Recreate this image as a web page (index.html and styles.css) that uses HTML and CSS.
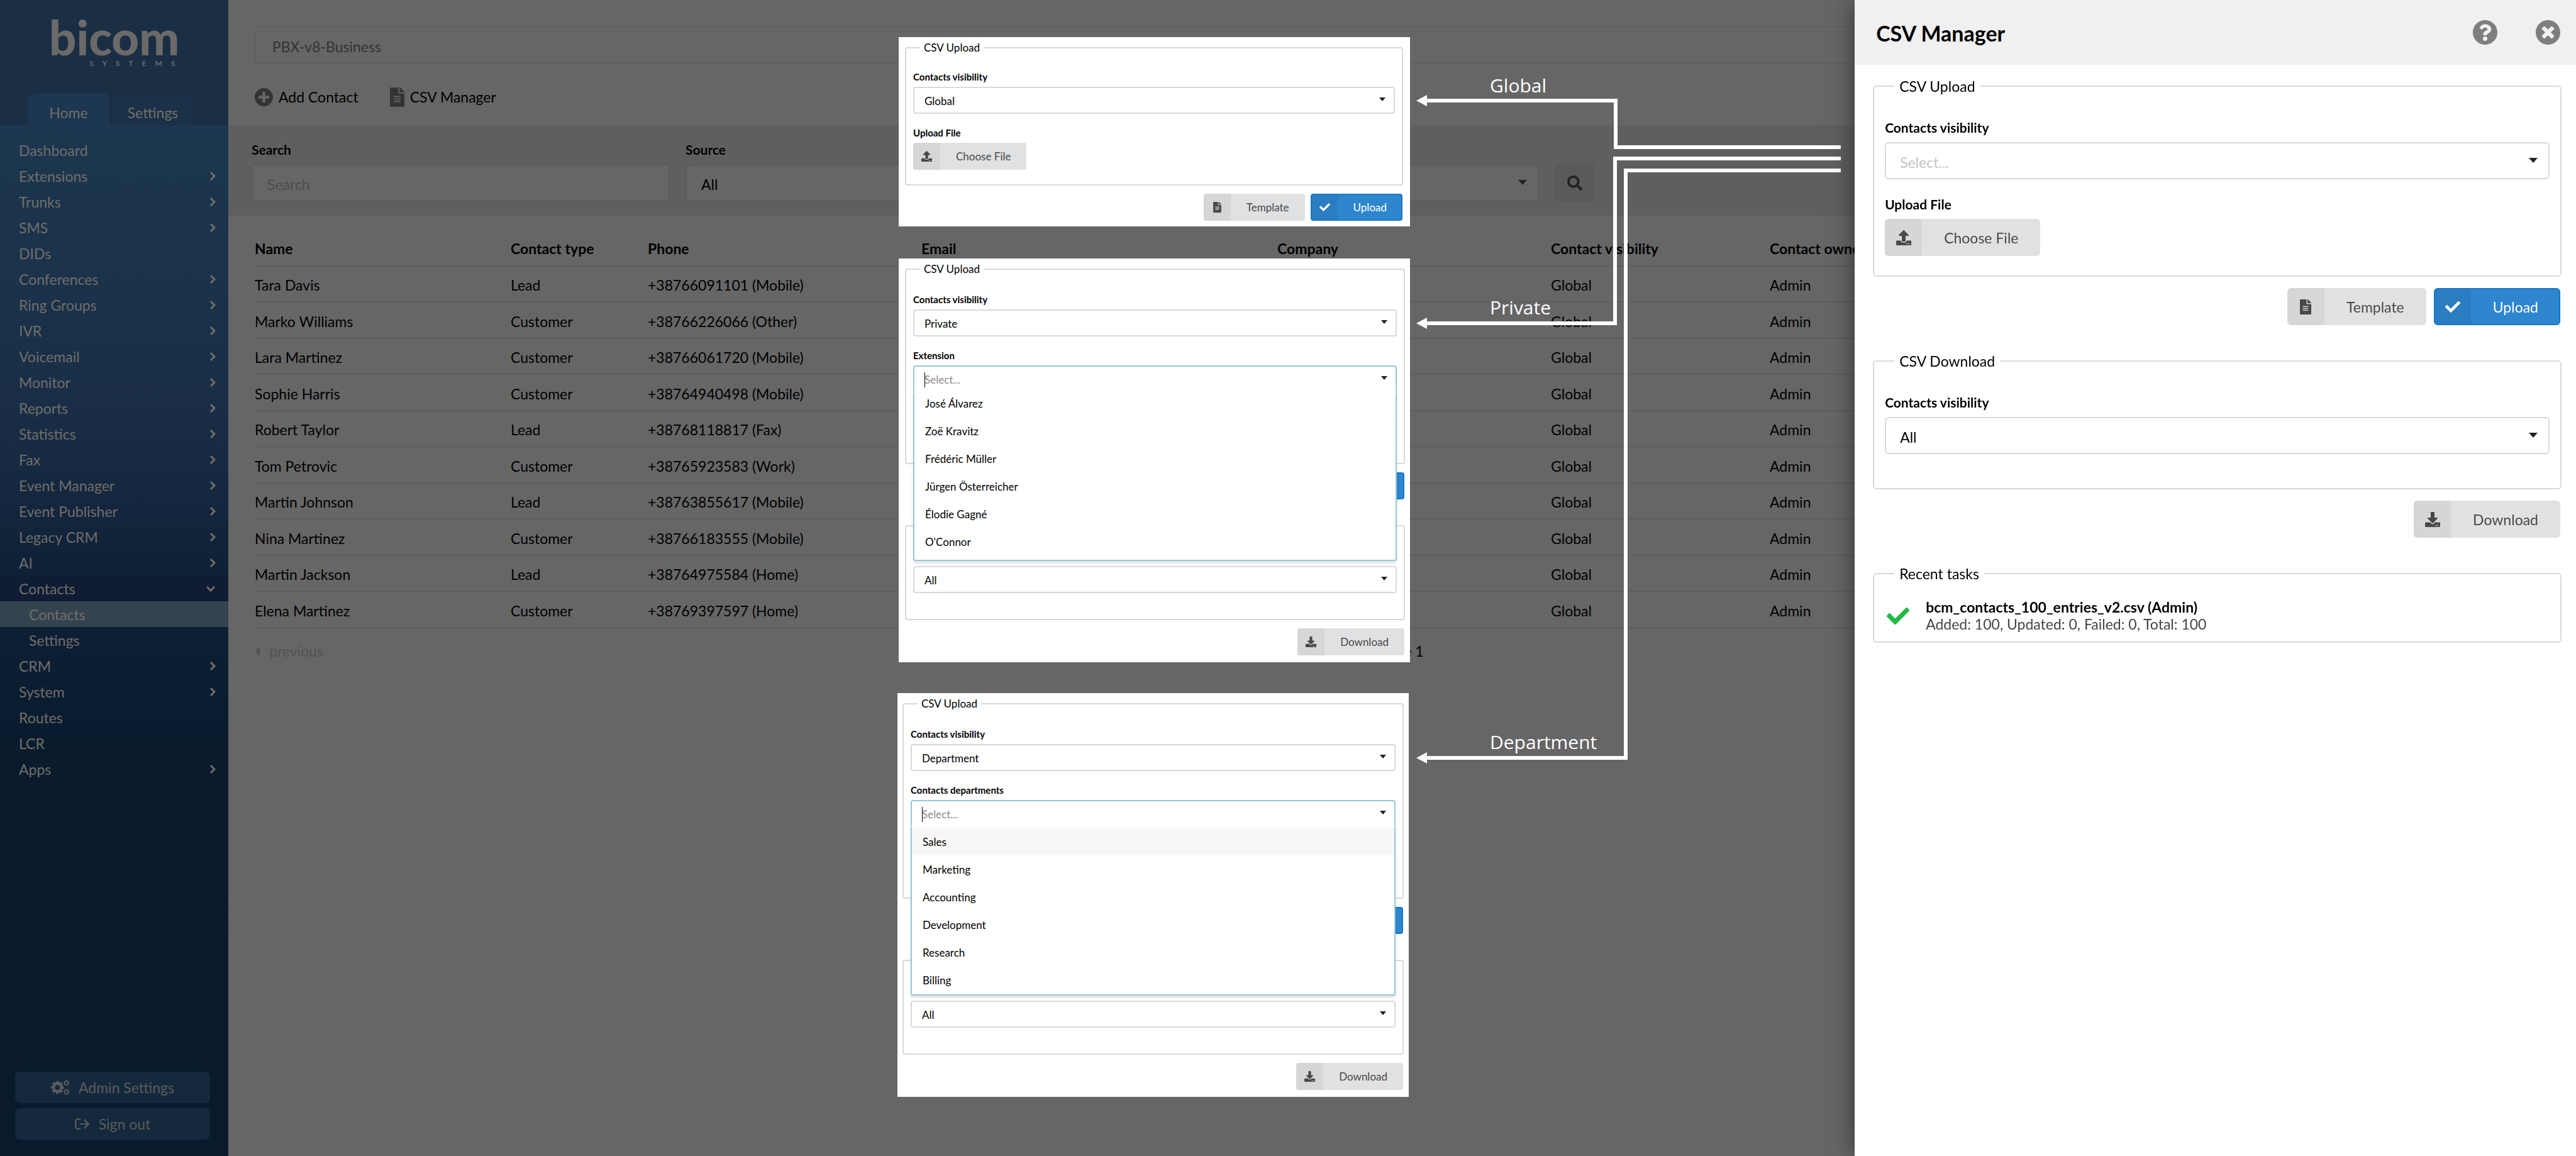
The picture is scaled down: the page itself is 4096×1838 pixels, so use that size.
FILE: index.html
```html
<!DOCTYPE html>
<html lang="en">
<head>
<meta charset="utf-8">
<meta name="viewport" content="width=device-width,initial-scale=1.0">
<title>Contacts - CSV Manager</title>
<link rel="stylesheet" href="styles.css">
</head>
<body>

<!-- icon set -->
<svg class="sprite" aria-hidden="true">
<symbol id="i-file" viewBox="0 0 384 512"><path d="M224 136V0H24C10.7 0 0 10.7 0 24v464c0 13.3 10.7 24 24 24h336c13.3 0 24-10.7 24-24V160H248c-13.2 0-24-10.8-24-24zm64 236c0 6.600-5.400 12-12 12H108c-6.600 0-12-5.400-12-12v-8c0-6.600 5.400-12 12-12h168c6.600 0 12 5.400 12 12v8zm0-64c0 6.600-5.400 12-12 12H108c-6.600 0-12-5.400-12-12v-8c0-6.600 5.400-12 12-12h168c6.600 0 12 5.400 12 12v8zm0-72v8c0 6.600-5.400 12-12 12H108c-6.600 0-12-5.400-12-12v-8c0-6.600 5.400-12 12-12h168c6.600 0 12 5.400 12 12zm96-114.100v6.100H256V0h6.100c6.400 0 12.500 2.500 17 7l97.900 98c4.500 4.500 7 10.600 7 16.900z"/></symbol>
<symbol id="i-check" viewBox="0 65 512 382"><path d="M173.900 439.400l-166.400-166.400c-10-10-10-26.200 0-36.200l36.200-36.200c10-10 26.200-10 36.200 0L192 312.700 432.100 72.600c10-10 26.200-10 36.200 0l36.200 36.200c10 10 10 26.200 0 36.200l-294.400 294.400c-10 10-26.200 10-36.200 0z"/></symbol>
<symbol id="i-upload" viewBox="0 0 512 512"><path d="M296 384h-80c-13.300 0-24-10.700-24-24V192h-87.700c-17.800 0-26.700-21.500-14.100-34.100L242.300 5.700c7.500-7.500 19.800-7.500 27.300 0l152.200 152.200c12.600 12.600 3.700 34.100-14.100 34.100H320v168c0 13.300-10.700 24-24 24zm216-8v112c0 13.300-10.700 24-24 24H24c-13.300 0-24-10.700-24-24V376c0-13.300 10.700-24 24-24h136v8c0 30.900 25.100 56 56 56h80c30.900 0 56-25.100 56-56v-8h136c13.300 0 24 10.700 24 24zm-124 88c0-11-9-20-20-20s-20 9-20 20 9 20 20 20 20-9 20-20zm64 0c0-11-9-20-20-20s-20 9-20 20 9 20 20 20 20-9 20-20z"/></symbol>
<symbol id="i-download" viewBox="0 0 512 512"><path d="M216 0h80c13.300 0 24 10.700 24 24v168h87.700c17.800 0 26.700 21.500 14.100 34.100L269.700 378.300c-7.500 7.500-19.800 7.500-27.300 0L90.100 226.100c-12.600-12.600-3.700-34.100 14.100-34.100H192V24c0-13.300 10.700-24 24-24zm296 376v112c0 13.300-10.700 24-24 24H24c-13.300 0-24-10.700-24-24V376c0-13.300 10.700-24 24-24h146.700l49 49c20.100 20.100 52.500 20.100 72.600 0l49-49H488c13.300 0 24 10.700 24 24zm-124 88c0-11-9-20-20-20s-20 9-20 20 9 20 20 20 20-9 20-20zm64 0c0-11-9-20-20-20s-20 9-20 20 9 20 20 20 20-9 20-20z"/></symbol>
<symbol id="i-plus" viewBox="8 8 496 496"><path d="M256 8C119 8 8 119 8 256s111 248 248 248 248-111 248-248S393 8 256 8zm144 276c0 6.600-5.400 12-12 12h-92v92c0 6.600-5.400 12-12 12h-56c-6.600 0-12-5.400-12-12v-92h-92c-6.600 0-12-5.400-12-12v-56c0-6.600 5.400-12 12-12h92v-92c0-6.600 5.400-12 12-12h56c6.600 0 12 5.400 12 12v92h92c6.600 0 12 5.400 12 12v56z"/></symbol>
<symbol id="i-close" viewBox="8 8 496 496"><path d="M256 8C119 8 8 119 8 256s111 248 248 248 248-111 248-248S393 8 256 8zm121.600 313.100c4.700 4.700 4.700 12.300 0 17L338 377.600c-4.700 4.700-12.300 4.700-17 0L256 312l-65.100 65.600c-4.700 4.700-12.300 4.700-17 0L134.400 338c-4.700-4.700-4.700-12.300 0-17l65.600-65-65.600-65.100c-4.700-4.700-4.700-12.300 0-17l39.600-39.600c4.700-4.700 12.300-4.700 17 0l65 65.700 65.100-65.600c4.700-4.700 12.300-4.700 17 0l39.600 39.600c4.700 4.700 4.700 12.300 0 17L312 256l65.600 65.100z"/></symbol>
<symbol id="i-help" viewBox="8 8 496 496"><path d="M504 256c0 137-111 248-248 248S8 393 8 256C8 119.100 119 8 256 8s248 111.100 248 248zM262.700 90c-54.500 0-89.300 23-116.600 63.800-3.500 5.300-2.400 12.400 2.700 16.200l34.700 26.300c5.200 4 12.600 3 16.700-2.100 17.900-22.700 30.100-35.800 57.300-35.800 20.400 0 45.700 13.100 45.700 33 0 15-12.400 22.700-32.500 34C247.100 238.500 216 254.900 216 296v4c0 6.600 5.400 12 12 12h56c6.600 0 12-5.400 12-12v-1.300c0-28.500 83.200-29.600 83.200-106.700 0-58-60.200-102-116.500-102zM256 338c-25.400 0-46 20.600-46 46 0 25.400 20.600 46 46 46s46-20.600 46-46c0-25.400-20.600-46-46-46z"/></symbol>
<symbol id="i-search" viewBox="0 0 512 512"><path d="M505 442.700L405.300 343c-4.500-4.500-10.600-7-17-7H372c27.600-35.300 44-79.700 44-128C416 93.100 322.900 0 208 0S0 93.100 0 208s93.100 208 208 208c48.300 0 92.700-16.400 128-44v16.300c0 6.400 2.500 12.500 7 17l99.700 99.700c9.400 9.400 24.600 9.400 33.900 0l28.300-28.300c9.400-9.400 9.400-24.600.1-34zM208 336c-70.700 0-128-57.200-128-128 0-70.700 57.200-128 128-128 70.700 0 128 57.200 128 128 0 70.700-57.200 128-128 128z"/></symbol>
<symbol id="i-right" viewBox="0 0 10 16"><path d="M2 2l6 6-6 6" fill="none" stroke="currentColor" stroke-width="3"/></symbol>
<symbol id="i-down" viewBox="0 0 16 10"><path d="M2 2l6 6 6-6" fill="none" stroke="currentColor" stroke-width="3"/></symbol>
<symbol id="i-cogs" viewBox="0 0 107 84"><g fill="none" stroke="currentColor"><circle cx="37" cy="42" r="22" stroke-width="16"/><circle cx="37" cy="42" r="32" stroke-width="10" stroke-dasharray="15 10.130" stroke-dashoffset="7"/><circle cx="88" cy="16" r="10" stroke-width="6"/><circle cx="88" cy="16" r="15" stroke-width="4" stroke-dasharray="8 7.700"/><circle cx="88" cy="67" r="10" stroke-width="6"/><circle cx="88" cy="67" r="15" stroke-width="4" stroke-dasharray="8 7.700"/></g></symbol>
<symbol id="i-out" viewBox="0 0 86 64"><path d="M33 5H16a11 11 0 0 0-11 11v32a11 11 0 0 0 11 11h17M28 32h50M53 7l26 25-26 25" fill="none" stroke="currentColor" stroke-width="8"/></symbol>
</svg>

<div class="app">

<aside class="sidebar">
<div class="side-head">
<div class="logo">
<div class="logo-name">bicom</div>
<div class="logo-sub">SYSTEMS</div>
</div>
<div class="tabs">
<a href="#" class="tab active">Home</a>
<a href="#" class="tab">Settings</a>
</div>
</div>
<nav class="menu">
<a href="#">Dashboard</a>
<a href="#">Extensions<svg><use href="#i-right"/></svg></a>
<a href="#">Trunks<svg><use href="#i-right"/></svg></a>
<a href="#">SMS<svg><use href="#i-right"/></svg></a>
<a href="#">DIDs</a>
<a href="#">Conferences<svg><use href="#i-right"/></svg></a>
<a href="#">Ring Groups<svg><use href="#i-right"/></svg></a>
<a href="#">IVR<svg><use href="#i-right"/></svg></a>
<a href="#">Voicemail<svg><use href="#i-right"/></svg></a>
<a href="#">Monitor<svg><use href="#i-right"/></svg></a>
<a href="#">Reports<svg><use href="#i-right"/></svg></a>
<a href="#">Statistics<svg><use href="#i-right"/></svg></a>
<a href="#">Fax<svg><use href="#i-right"/></svg></a>
<a href="#">Event Manager<svg><use href="#i-right"/></svg></a>
<a href="#">Event Publisher<svg><use href="#i-right"/></svg></a>
<a href="#">Legacy CRM<svg><use href="#i-right"/></svg></a>
<a href="#">AI<svg><use href="#i-right"/></svg></a>
<a href="#" class="open">Contacts<svg class="down"><use href="#i-down"/></svg></a>
<a href="#" class="sub current">Contacts</a>
<a href="#" class="sub">Settings</a>
<a href="#">CRM<svg><use href="#i-right"/></svg></a>
<a href="#">System<svg><use href="#i-right"/></svg></a>
<a href="#">Routes</a>
<a href="#">LCR</a>
<a href="#">Apps<svg><use href="#i-right"/></svg></a>
</nav>
<div class="side-foot">
<button class="side-btn"><svg class="cogs"><use href="#i-cogs"/></svg>Admin Settings</button>
<button class="side-btn"><svg class="out"><use href="#i-out"/></svg>Sign out</button>
</div>
</aside>

<main class="main">
<div class="top">
<input class="server" type="text" value="PBX-v8-Business" aria-label="Server" readonly>
</div>
<div class="toolbar">
<a href="#"><svg class="plus"><use href="#i-plus"/></svg>Add Contact</a>
<a href="#"><svg class="doc"><use href="#i-file"/></svg>CSV Manager</a>
</div>

<form class="filter">
<div>
<label for="search">Search</label>
<input id="search" type="text" placeholder="Search">
</div>
<div>
<label for="source">Source</label>
<div class="drop"><select id="source"><option>All</option></select></div>
</div>
<button type="button" aria-label="Find"><svg><use href="#i-search"/></svg></button>
</form>

<div class="list">
<table>
<colgroup><col class="c-name"><col class="c-type"><col class="c-phone"><col class="c-email"><col class="c-company"><col class="c-vis"><col></colgroup>
<thead>
<tr><th>Name</th><th>Contact type</th><th>Phone</th><th>Email</th><th>Company</th><th>Contact visibility</th><th>Contact owner</th></tr>
</thead>
<tbody>
<tr><td>Tara Davis</td><td>Lead</td><td>+38766091101 (Mobile)</td><td></td><td></td><td>Global</td><td>Admin</td></tr>
<tr><td>Marko Williams</td><td>Customer</td><td>+38766226066 (Other)</td><td></td><td></td><td>Global</td><td>Admin</td></tr>
<tr><td>Lara Martinez</td><td>Customer</td><td>+38766061720 (Mobile)</td><td></td><td></td><td>Global</td><td>Admin</td></tr>
<tr><td>Sophie Harris</td><td>Customer</td><td>+38764940498 (Mobile)</td><td></td><td></td><td>Global</td><td>Admin</td></tr>
<tr><td>Robert Taylor</td><td>Lead</td><td>+38768118817 (Fax)</td><td></td><td></td><td>Global</td><td>Admin</td></tr>
<tr><td>Tom Petrovic</td><td>Customer</td><td>+38765923583 (Work)</td><td></td><td></td><td>Global</td><td>Admin</td></tr>
<tr><td>Martin Johnson</td><td>Lead</td><td>+38763855617 (Mobile)</td><td></td><td></td><td>Global</td><td>Admin</td></tr>
<tr><td>Nina Martinez</td><td>Customer</td><td>+38766183555 (Mobile)</td><td></td><td></td><td>Global</td><td>Admin</td></tr>
<tr><td>Martin Jackson</td><td>Lead</td><td>+38764975584 (Home)</td><td></td><td></td><td>Global</td><td>Admin</td></tr>
<tr><td>Elena Martinez</td><td>Customer</td><td>+38769397597 (Home)</td><td></td><td></td><td>Global</td><td>Admin</td></tr>
</tbody>
</table>
<div class="pager">
<span class="prev">previous</span>
<span>Page 1</span>
</div>
</div>
</main>
</div>

<!-- arrows from the drawer to the three forms -->
<svg class="arrows">
<g fill="none" stroke="#fff" stroke-width="6">
<path d="M2266 160H2569V234H2927"/>
<path d="M2266 514H2568V252H2927"/>
<path d="M2266 1205H2585V271H2927"/>
</g>
<g fill="#fff">
<path d="M2252 160l17-9v18z"/>
<path d="M2252 514l17-9v18z"/>
<path d="M2252 1205l17-9v18z"/>
<text x="2369" y="147">Global</text>
<text x="2369" y="500">Private</text>
<text x="2369" y="1191">Department</text>
</g>
</svg>

<section class="popup popup-global">
<fieldset>
<legend>CSV Upload</legend>
<div class="field">
<label for="vis1">Contacts visibility</label>
<div class="drop"><select id="vis1"><option>Global</option></select></div>
</div>
<div class="field file">
<label for="file1">Upload File</label>
<button class="btn" id="file1"><i><svg><use href="#i-upload"/></svg></i><span>Choose File</span></button>
</div>
</fieldset>
<div class="actions">
<button class="btn"><i><svg class="doc"><use href="#i-file"/></svg></i><span>Template</span></button>
<button class="btn blue"><i><svg><use href="#i-check"/></svg></i><span>Upload</span></button>
</div>
</section>

<section class="popup popup-private">
<fieldset>
<legend>CSV Upload</legend>
<div class="field">
<label for="vis2">Contacts visibility</label>
<div class="drop"><select id="vis2"><option>Private</option></select></div>
</div>
<div class="field menu-space">
<label for="ext">Extension</label>
<div class="drop opened">
<input id="ext" type="text" placeholder="Select...">
<div class="options">
<ul class="scrolled">
<li>José Álvarez</li>
<li>Zoë Kravitz</li>
<li>Frédéric Müller</li>
<li>Jürgen Österreicher</li>
<li>Élodie Gagné</li>
<li>O'Connor</li>
</ul>
</div>
</div>
</div>
</fieldset>
<div class="actions">
<button class="btn blue behind" aria-label="Upload"></button>
</div>
<fieldset class="untitled" aria-label="CSV Download">
<div class="drop field"><select aria-label="Contacts visibility"><option>All</option></select></div>
</fieldset>
<div class="actions">
<button class="btn"><i><svg><use href="#i-download"/></svg></i><span>Download</span></button>
</div>
</section>

<section class="popup popup-department">
<fieldset>
<legend>CSV Upload</legend>
<div class="field">
<label for="vis3">Contacts visibility</label>
<div class="drop"><select id="vis3"><option>Department</option></select></div>
</div>
<div class="field menu-space">
<label for="dep">Contacts departments</label>
<div class="drop opened">
<input id="dep" type="text" placeholder="Select...">
<div class="options">
<ul>
<li class="hover">Sales</li>
<li>Marketing</li>
<li>Accounting</li>
<li>Development</li>
<li>Research</li>
<li>Billing</li>
</ul>
</div>
</div>
</div>
</fieldset>
<div class="actions">
<button class="btn blue behind" aria-label="Upload"></button>
</div>
<fieldset class="untitled" aria-label="CSV Download">
<div class="drop field"><select aria-label="Contacts visibility"><option>All</option></select></div>
</fieldset>
<div class="actions">
<button class="btn"><i><svg><use href="#i-download"/></svg></i><span>Download</span></button>
</div>
</section>

<aside class="drawer">
<header>
<h1>CSV Manager</h1>
<button aria-label="Help"><svg><use href="#i-help"/></svg></button>
<button aria-label="Close"><svg><use href="#i-close"/></svg></button>
</header>
<div class="drawer-body">
<fieldset>
<legend>CSV Upload</legend>
<div class="field">
<label for="vis">Contacts visibility</label>
<div class="drop"><select id="vis" class="empty"><option>Select...</option></select></div>
</div>
<div class="field file">
<label for="file">Upload File</label>
<button class="btn" id="file"><i><svg><use href="#i-upload"/></svg></i><span>Choose File</span></button>
</div>
</fieldset>
<div class="actions">
<button class="btn"><i><svg class="doc"><use href="#i-file"/></svg></i><span>Template</span></button>
<button class="btn blue"><i><svg><use href="#i-check"/></svg></i><span>Upload</span></button>
</div>
<fieldset>
<legend>CSV Download</legend>
<div class="field">
<label for="down">Contacts visibility</label>
<div class="drop"><select id="down"><option>All</option></select></div>
</div>
</fieldset>
<div class="actions">
<button class="btn"><i><svg><use href="#i-download"/></svg></i><span>Download</span></button>
</div>
<fieldset class="recent">
<legend>Recent tasks</legend>
<div class="task">
<svg><use href="#i-check"/></svg>
<div>
<b>bcm_contacts_100_entries_v2.csv (Admin)</b>
<p>Added: 100, Updated: 0, Failed: 0, Total: 100</p>
</div>
</div>
</fieldset>
</div>
</aside>

</body>
</html>
```

FILE: styles.css
```css
*
{
box-sizing:border-box;
}
body
{
margin:0;
background:#666;
font-family:Lato,sans-serif;
font-size:23px;
line-height:28px;
color:#000;
}
a
{
color:inherit;
text-decoration:none;
}
button,input,select
{
font:inherit;
color:inherit;
margin:0;
}
svg
{
fill:currentColor;
}
.sprite
{
position:absolute;
width:0;
height:0;
}
.app
{
display:flex;
min-height:100vh;
}

/* sidebar */
.sidebar
{
width:363px;
flex:none;
display:flex;
flex-direction:column;
color:#716e6a;
background:#1a2e44;
}
.side-head
{
height:199px;
display:flex;
flex-direction:column;
justify-content:space-between;
}
.logo
{
margin:24px 0 0 78px;
color:#6b6a69;
}
.logo-name
{
font-size:76px;
font-weight:900;
line-height:70px;
}
.logo-sub
{
font-size:12px;
line-height:14px;
font-weight:bold;
letter-spacing:14px;
margin-left:64px;
}
.tabs
{
display:flex;
gap:4px;
padding-left:44px;
}
.tab
{
width:130px;
height:50px;
padding-top:16px;
text-align:center;
border-radius:8px 8px 0 0;
background:#1a3147;
}
.tab.active
{
background:#1c374f;
}
.menu
{
flex:1;
padding-top:19px;
background:linear-gradient(#1c374f 0,#192e46 30%,#0f2137 47%,#091b2d 66%,#081a2c 100%);
}
.menu a
{
display:flex;
align-items:center;
justify-content:space-between;
height:41px;
padding:0 20px 0 30px;
}
.menu svg
{
width:10px;
height:16px;
}
.menu svg.down
{
width:16px;
height:10px;
}
.menu .open
{
background:#0f1c34;
}
.menu .sub
{
padding-left:46px;
}
.menu .current
{
background:#334350;
}
.side-foot
{
display:flex;
flex-direction:column;
gap:8px;
padding:0 29px 26px 24px;
background:#081a2c;
}
.side-btn
{
display:flex;
align-items:center;
justify-content:center;
gap:14px;
height:50px;
border:0;
border-radius:8px;
background:#14293b;
color:#5a5b5e;
}
.cogs
{
width:30px;
height:24px;
}
.out
{
width:24px;
height:18px;
}

/* page */
.main
{
flex:1;
min-width:0;
}
.top
{
padding:41px 42px 0;
}
.server
{
display:block;
width:100%;
height:61px;
padding:4px 26px 0;
border:2px solid #606060;
border-radius:6px;
background:#666;
color:#333;
}
.toolbar
{
display:flex;
gap:50px;
align-items:center;
height:97px;
padding:7px 42px 0;
}
.toolbar a
{
display:flex;
align-items:center;
gap:9px;
}
.toolbar svg
{
width:29px;
height:29px;
color:#333;
}
.toolbar svg.doc
{
width:23px;
height:31px;
}
.filter
{
display:grid;
grid-template-columns:665fr 1357fr 64px 1498fr;
gap:25px;
align-items:end;
height:144px;
padding:0 37px 22px;
background:#5f5f5f;
}
.filter label
{
display:block;
margin-bottom:11px;
font-size:21px;
line-height:25px;
font-weight:bold;
}
.filter input,.filter select
{
display:block;
width:100%;
height:60px;
padding:4px 23px 0;
border:2px solid #5a5a5a;
border-radius:6px;
background:#666;
}
.filter input::placeholder
{
color:#4d4d4d;
opacity:1;
}
.filter button
{
height:60px;
border:0;
border-radius:6px;
background:#5a5a5a;
color:#222;
}
.filter button svg
{
display:block;
width:24px;
height:24px;
margin:auto;
}

/* drop downs */
.drop
{
position:relative;
}
.drop select
{
display:block;
width:100%;
appearance:none;
outline:0;
}
.drop::after
{
content:"";
position:absolute;
right:19px;
top:25px;
border:7px solid transparent;
border-top:8px solid #222;
border-bottom:0;
}

/* contacts table */
.list
{
padding:27px 42px 0;
}
table
{
width:100%;
table-layout:fixed;
border-collapse:separate;
border-spacing:0;
}
.c-name
{
width:407px;
}
.c-type
{
width:218px;
}
.c-phone,.c-company
{
width:435px;
}
.c-email
{
width:566px;
}
.c-vis
{
width:348px;
}
th,td
{
height:57px;
padding:3px 0 0;
text-align:left;
white-space:nowrap;
border-bottom:2px solid #5d5d5d;
}
th
{
height:54px;
padding:0 0 2px;
}
tbody tr:nth-child(even) td
{
height:58px;
}
.pager
{
display:grid;
grid-template-columns:1fr auto 1fr;
padding-top:22px;
}
.prev
{
display:flex;
align-items:center;
gap:15px;
color:#525252;
}
.prev::before
{
content:"";
border:7px solid transparent;
border-right:8px solid #525252;
border-left:0;
}

/* forms */
fieldset
{
min-width:0;
margin:0;
padding:39px 17px 27px;
border:2px solid #d9d9d9;
border-radius:6px;
}
legend
{
margin-left:15px;
padding:0 8px;
}
.field
{
margin-bottom:27px;
}
.field.file
{
margin-bottom:4px;
}
.field label
{
display:block;
width:max-content;
margin-bottom:11px;
font-size:21px;
line-height:25px;
font-weight:bold;
}
.field select,.field input
{
display:block;
width:100%;
height:59px;
padding:4px 22px 0;
border:2px solid #d9d9d9;
border-radius:6px;
background:#fff;
}
.field .empty
{
color:#c4c4c4;
}
.btn
{
display:flex;
height:59px;
padding:0;
border:0;
border-radius:6px;
overflow:hidden;
background:#e0e1e2;
color:#484848;
}
.btn i
{
display:flex;
align-items:center;
justify-content:center;
width:59px;
height:100%;
background:#d5d6d7;
}
.btn svg
{
width:24px;
height:24px;
}
.btn svg.doc
{
width:18px;
}
.btn span
{
padding:0 35px;
align-self:center;
}
.btn.blue
{
background:#2e86cf;
color:#fff;
border:2px solid #1678c8;
}
.btn.blue i
{
width:57px;
background:#2b7dc2;
}
.btn.blue span
{
padding-right:33px;
}
.actions
{
display:flex;
justify-content:flex-end;
gap:12px;
margin:18px 2px 43px;
}

/* drawer */
.drawer
{
position:fixed;
top:0;
right:0;
bottom:0;
width:28%;
background:#fff;
box-shadow:0 0 36px rgba(0,0,0,.5);
}
.drawer header
{
display:flex;
align-items:center;
gap:61px;
height:103px;
padding:0 25px 0 34px;
background:#f0f0f0;
}
.drawer h1
{
flex:1;
margin:0;
padding-top:2px;
font-size:34px;
line-height:40px;
}
.drawer header button
{
padding:0;
border:0;
background:none;
color:#7f7f7f;
}
.drawer header svg
{
display:block;
width:39px;
height:39px;
}
.drawer-body
{
padding:20px 23px 0 29px;
}
.recent
{
padding:26px 17px 14px;
}
.task
{
display:flex;
align-items:center;
gap:26px;
padding-left:3px;
line-height:27px;
}
.task svg
{
width:36px;
height:27px;
color:#21ba45;
}
.task p
{
margin:0;
color:#444;
}

/* floating forms */
.popup
{
position:absolute;
width:813px;
padding:7px 8px 11px 10px;
background:#fff;
font-size:17px;
line-height:20px;
}
.popup-global
{
left:1429px;
top:59px;
padding-right:11px;
padding-bottom:9px;
}
.popup-private
{
left:1429px;
top:411px;
}
.popup-department
{
left:1427px;
top:1102px;
padding-left:8px;
}
.popup fieldset
{
padding:29px 11px 20px;
border-radius:4px;
}
.popup-global fieldset
{
padding-top:27px;
}
.popup legend
{
margin-left:11px;
padding:0 6px;
}
.popup .field
{
margin-bottom:21px;
}
.popup .field.file
{
margin-bottom:3px;
}
/* room for the open list */
.popup .menu-space
{
margin-bottom:92px;
}
.popup .untitled
{
margin-top:41px;
padding-top:63px;
}
.popup .field label
{
margin-bottom:7px;
font-size:15px;
line-height:18px;
}
.popup .field select,.popup .field input
{
height:43px;
padding:2px 16px 0;
border-radius:4px;
}
.popup .drop::after
{
right:15px;
top:17px;
border-width:6px 5px 0;
}
.popup .btn
{
height:43px;
border-radius:4px;
}
.popup .btn i
{
width:43px;
}
.popup .btn svg
{
width:17px;
height:17px;
}
.popup .btn svg.doc
{
width:13px;
}
.popup .btn span
{
padding:0 25px;
}
.popup .btn.blue i
{
width:41px;
}
.popup .btn.blue span
{
padding-right:23px;
}
.popup .btn.behind
{
width:147px;
}
.popup .actions
{
gap:9px;
margin:13px 1px 0;
}
.popup .opened input
{
border-color:#96c8da;
border-bottom-color:#fff;
border-radius:4px 4px 0 0;
}
.opened input::placeholder
{
color:#8a8a8a;
opacity:1;
}
/* text cursor */
.opened::before
{
content:"";
position:absolute;
left:18px;
top:11px;
width:1px;
height:24px;
background:#000;
}
.options
{
position:absolute;
z-index:2;
left:0;
right:0;
top:43px;
height:268px;
overflow:hidden;
background:#fff;
border:2px solid #96c8da;
border-top:0;
border-radius:0 0 4px 4px;
box-shadow:0 3px 4px rgba(34,36,38,.15);
}
.options ul
{
margin:0;
padding:1px 0 0;
list-style:none;
}
.options .scrolled
{
margin-top:-6px;
}
.options li
{
height:44px;
padding:13px 17px 0;
border-bottom:1px solid #fafafa;
}
.options .hover
{
background:#f7f7f7;
}

/* arrows */
.arrows
{
position:absolute;
left:0;
top:0;
width:100%;
height:100%;
}
.arrows text
{
font-family:"Open Sans",sans-serif;
font-size:30px;
}
```
